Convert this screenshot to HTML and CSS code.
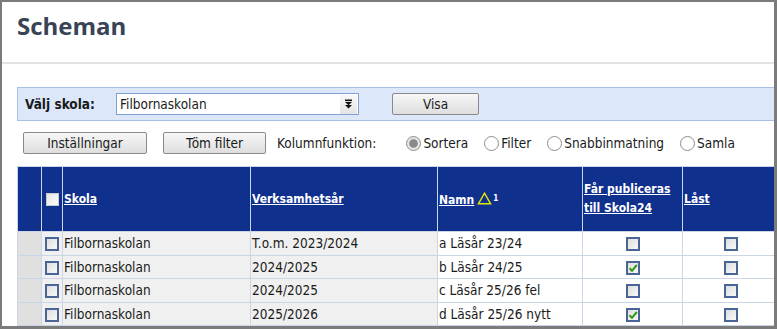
FILE: index.html
```html
<!DOCTYPE html>
<html lang="sv">
<head>
<meta charset="utf-8">
<title>Scheman</title>
<link rel="stylesheet" href="styles.css">
</head>
<body>
<div class="frame">
  <header class="page-head">
    <h1 class="title">Scheman</h1>
  </header>
  <main class="content">
    <div class="school-bar">
      <label class="school-label">Välj skola:</label>
      <div class="select">
        <span class="select-value">Filbornaskolan</span>
        <span class="select-arrow">
          <svg width="7" height="10" viewBox="0 0 7 10"><rect x="0" y="0.5" width="7" height="1.6" fill="#111"/><path d="M0 3 L7 3 L3.5 6.2 Z" fill="#111"/><path d="M0 6 L7 6 L3.5 9.5 Z" fill="#111"/></svg>
        </span>
      </div>
      <button class="btn btn-visa">Visa</button>
    </div>
    <div class="toolbar">
      <button class="btn btn-settings">Inställningar</button>
      <button class="btn btn-clear">Töm filter</button>
      <span class="col-func">Kolumnfunktion:</span>
      <div class="radios">
        <span class="radio-item"><span class="radio checked"></span>Sortera</span>
        <span class="radio-item"><span class="radio"></span>Filter</span>
        <span class="radio-item"><span class="radio"></span>Snabbinmatning</span>
        <span class="radio-item"><span class="radio"></span>Samla</span>
      </div>
    </div>
    <table class="grid">
      <colgroup>
        <col class="c0"><col class="c1"><col class="c2"><col class="c3"><col class="c4"><col class="c5"><col class="c6">
      </colgroup>
      <thead>
        <tr>
          <th></th>
          <th class="center"><span class="cb cb-head"></span></th>
          <th><a href="#">Skola</a></th>
          <th><a href="#">Verksamhetsår</a></th>
          <th><a href="#">Namn</a><span class="sort-ind"><svg width="15" height="13" viewBox="0 0 15 13"><path d="M7.5 1.2 L13.6 11.8 L1.4 11.8 Z" fill="none" stroke="#e6e600" stroke-width="1.4"/></svg><sub>1</sub></span></th>
          <th><a href="#" class="two-line">Får publiceras<br>till Skola24</a></th>
          <th><a href="#">Låst</a></th>
        </tr>
      </thead>
      <tbody>
        <tr>
          <td class="gut"></td>
          <td class="center shade"><span class="cb"></span></td>
          <td class="shade">Filbornaskolan</td>
          <td class="shade">T.o.m. 2023/2024</td>
          <td>a Läsår 23/24</td>
          <td class="center"><span class="cb"></span></td>
          <td class="center"><span class="cb"></span></td>
        </tr>
        <tr>
          <td class="gut"></td>
          <td class="center shade"><span class="cb"></span></td>
          <td class="shade">Filbornaskolan</td>
          <td class="shade">2024/2025</td>
          <td>b Läsår 24/25</td>
          <td class="center"><span class="cb checked"><svg width="10" height="10" viewBox="0 0 10 10"><path d="M1.5 5.2 L4 7.8 L8.8 2" fill="none" stroke="#2f9a12" stroke-width="2"/></svg></span></td>
          <td class="center"><span class="cb"></span></td>
        </tr>
        <tr>
          <td class="gut"></td>
          <td class="center shade"><span class="cb"></span></td>
          <td class="shade">Filbornaskolan</td>
          <td class="shade">2024/2025</td>
          <td>c Läsår 25/26 fel</td>
          <td class="center"><span class="cb"></span></td>
          <td class="center"><span class="cb"></span></td>
        </tr>
        <tr>
          <td class="gut"></td>
          <td class="center shade"><span class="cb"></span></td>
          <td class="shade">Filbornaskolan</td>
          <td class="shade">2025/2026</td>
          <td>d Läsår 25/26 nytt</td>
          <td class="center"><span class="cb checked"><svg width="10" height="10" viewBox="0 0 10 10"><path d="M1.5 5.2 L4 7.8 L8.8 2" fill="none" stroke="#2f9a12" stroke-width="2"/></svg></span></td>
          <td class="center"><span class="cb"></span></td>
        </tr>
      </tbody>
    </table>
  </main>
</div>
</body>
</html>
```

FILE: styles.css
```css
* { box-sizing: border-box; }
html, body { margin: 0; padding: 0; background: #fff; }
body {
  font-family: "DejaVu Sans Condensed", "DejaVu Sans", sans-serif;
  font-size: 13.5px;
  color: #1a1a1a;
}
.frame {
  width: 777px;
  height: 329px;
  border-top: 2px solid #7b7b7b;
  border-left: 2px solid #7b7b7b;
  border-right: 3px solid #7b7b7b;
  border-bottom: 3px solid #7b7b7b;
  overflow: hidden;
  background: #fff;
}
.page-head {
  height: 62px;
  border-bottom: 2px solid #e3e3e3;
  padding: 9px 0 0 15px;
}
.title {
  margin: 0;
  font-family: "Open Sans", "Lato", sans-serif;
  font-weight: 700;
  font-size: 24px;
  line-height: 30px;
  color: #384456;
}
.content {
  padding: 23px 0 0 15px;
}
.school-bar {
  display: flex;
  align-items: center;
  height: 34px;
  background: #dce7fa;
  border: 1px solid #a9bfe6;
  border-right: none;
  padding-left: 7px;
}
.school-label {
  font-weight: 700;
  width: 91px;
}
.select {
  display: flex;
  align-items: center;
  width: 243px;
  height: 22px;
  background: #fff;
  border: 1px solid #7fa2d6;
  padding-left: 3px;
}
.select-value { flex: 1; }
.select-arrow {
  display: flex;
  align-items: center;
  justify-content: center;
  width: 17px;
  height: 19px;
  margin-right: 1px;
  background: linear-gradient(#f8f8f8, #e4e4e4);
}
.btn {
  font-family: inherit;
  font-size: 13.5px;
  color: #1a1a1a;
  height: 22px;
  padding: 0;
  border: 1px solid #8a8a8a;
  border-radius: 2px;
  background: linear-gradient(#f7f7f7, #dedede);
}
.btn-visa { width: 87px; margin-left: 33px; }
.toolbar {
  display: flex;
  align-items: center;
  height: 24px;
  margin-top: 10px;
  padding-left: 6px;
}
.btn-settings { width: 124px; }
.btn-clear { width: 103px; margin-left: 16px; }
.col-func { margin-left: 11px; margin-right: 30px; }
.radios { display: flex; align-items: center; }
.radio-item {
  display: inline-flex;
  align-items: center;
  margin-right: 16px;
}
.radio {
  width: 15px;
  height: 15px;
  border-radius: 50%;
  border: 1px solid #8e8e8e;
  background: #fff;
  margin-right: 2px;
}
.radio.checked {
  background: radial-gradient(circle, #8a8a8a 0 3.8px, #e6e6e6 4.8px);
}
.grid {
  margin-top: 11px;
  border-collapse: separate;
  border-spacing: 1px;
  background: #cbd5e8;
  table-layout: fixed;
  width: 763px;
}
.c0 { width: 23px; }
.c1 { width: 20px; }
.c2 { width: 187px; }
.c3 { width: 186px; }
.c4 { width: 144px; }
.c5 { width: 99px; }
.c6 { width: 96px; }
.grid th {
  background: #10308e;
  height: 64px;
  text-align: left;
  font-weight: 700;
  font-size: 12px;
  padding: 0 1px;
  vertical-align: middle;
  white-space: nowrap;
}
.grid th a {
  color: #fff;
  text-decoration: underline;
}
.grid th a.two-line { line-height: 19px; display: inline-block; }
.sort-ind {
  display: inline-flex;
  align-items: center;
  margin-left: 3px;
  vertical-align: -1px;
}
.sort-ind sub { font-size: 8px; color: #fff; margin-left: 1px; vertical-align: -3px; }
.grid td {
  height: 22.5px;
  background: #fff;
  padding: 0 1px;
  white-space: nowrap;
  vertical-align: middle;
}
.grid td.shade { background: #f0f0f0; }
.grid td.gut { background: #e0e0e0; }
.center { text-align: center; }
.grid th.center { text-align: center; }
.cb {
  display: inline-flex;
  align-items: center;
  justify-content: center;
  width: 14px;
  height: 14px;
  border: 2px solid #4b6497;
  background: linear-gradient(135deg, #dedede, #f8f8f8);
  vertical-align: middle;
}
.cb-head {
  border: 1px solid #c9c9c9;
  background: linear-gradient(135deg, #e4e4e4, #fdfdfd);
  width: 13px;
  height: 13px;
}
```
